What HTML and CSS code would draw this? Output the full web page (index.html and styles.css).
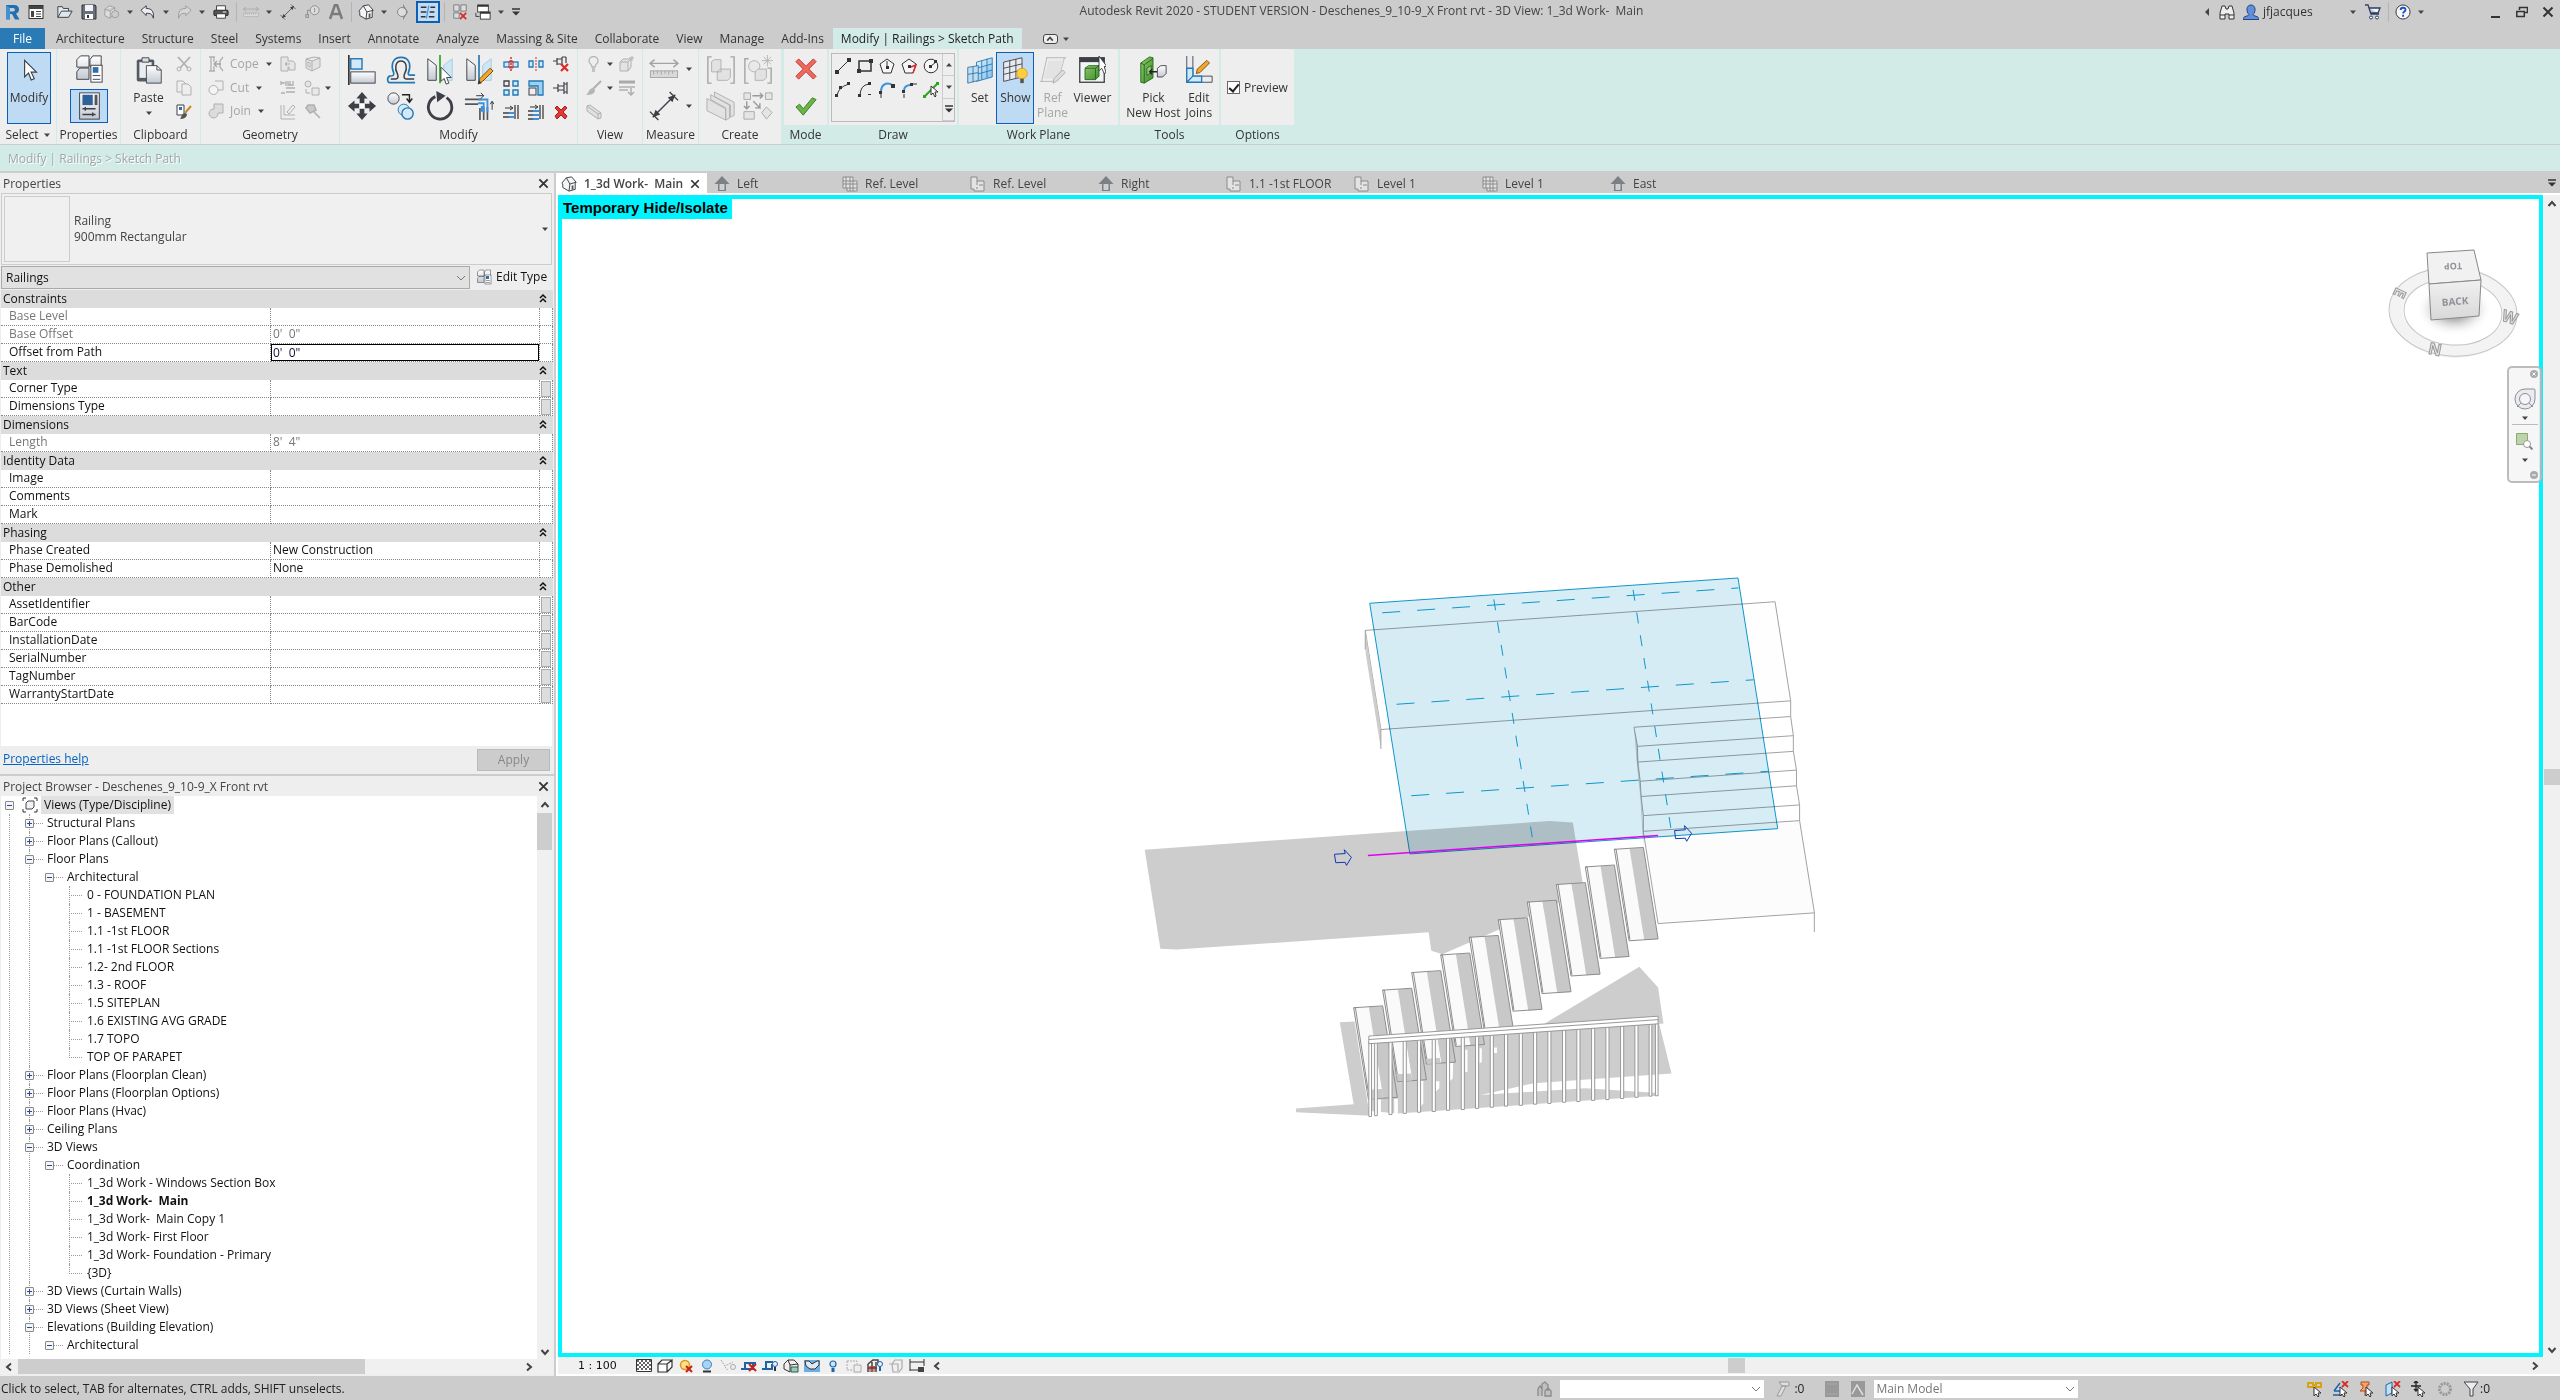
FILE: index.html
```html
<!DOCTYPE html>
<html lang="en">
<head>
<meta charset="utf-8">
<title>Autodesk Revit 2020</title>
<link rel="stylesheet" href="styles.css">
</head>
<body>
<svg class="sprite" aria-hidden="true">
  <defs>
    <linearGradient id="g-steel" x1="0" y1="0" x2="0" y2="1"><stop offset="0" stop-color="#fff"/><stop offset="1" stop-color="#c3c9d2"/></linearGradient>
    <linearGradient id="g-sky" x1="0" y1="0" x2="1" y2="1"><stop offset="0" stop-color="#e3f3fd"/><stop offset="1" stop-color="#7dbde8"/></linearGradient>
    <linearGradient id="g-green" x1="0" y1="0" x2="1" y2="1"><stop offset="0" stop-color="#8cc66a"/><stop offset="1" stop-color="#3f8f2c"/></linearGradient>
    <linearGradient id="g-cube" x1="0" y1="0" x2="0" y2="1"><stop offset="0" stop-color="#f0f0f0"/><stop offset="1" stop-color="#d8d8d8"/></linearGradient>
    <radialGradient id="g-shade"><stop offset=".4" stop-color="#b5b5b5"/><stop offset="1" stop-color="#fff" stop-opacity="0"/></radialGradient>
  </defs>
  <!-- 16px quick access and status icons -->
  <symbol id="logo" viewBox="0 0 16 16"><path d="M2 1h8q5 0 5 4.500 0 3-3 4l3.500 6H11L8 10H6v5.500H2z" fill="#1f6fb2"/><path d="M6 4v3.500h3q2 0 2-1.700T9 4z" fill="#ccc"/><path d="M2 1l4 3v11H2z" fill="#3f93d4"/></symbol>
  <symbol id="home" viewBox="0 0 16 16"><rect x="1" y="1.500" width="14" height="13" fill="#fff" stroke="#333"/><path d="M1 2h14v3H1zM3 7h3v6H3z" fill="#444"/><path d="M8 7.500h5M8 10h5M8 12.500h5" stroke="#444"/></symbol>
  <symbol id="open" viewBox="0 0 18 16"><path d="M1 14V2h5l1 2h6v3" fill="#e6ebf2" stroke="#333"/><path d="M1 14L5 7h12l-4 7z" fill="#dfe6ef" stroke="#333"/></symbol>
  <symbol id="save" viewBox="0 0 16 16"><path d="M1 1h13l1 1v13H1z" fill="#6a717c" stroke="#333"/><path d="M4 1h8v6H4z" fill="#f0f3f7"/><path d="M4 10h8v5H4z" fill="#fff"/><path d="M6 11h2v3H6z" fill="#333"/></symbol>
  <symbol id="sync" viewBox="0 0 18 16"><path d="M1 5l5-4 6 2v8l-6 4-5-3zM1 5l6 2 5-4M7 7v8" fill="#ddd" stroke="#999"/><circle cx="12.500" cy="10.500" r="4" fill="#ccc" stroke="#999"/></symbol>
  <symbol id="undo" viewBox="0 0 18 16"><path d="M1 6l6-5v3c6 0 9 3 8 11-1-4-3-6-8-5.500V12z" fill="#e9eef4" stroke="#333"/></symbol>
  <symbol id="redo" viewBox="0 0 18 16"><path d="M17 6l-6-5v3C5 4 2 7 3 15c1-4 3-6 8-5.500V12z" fill="#d6d6d6" stroke="#999"/></symbol>
  <symbol id="print" viewBox="0 0 18 16"><path d="M4 6V1h10v5" fill="#fff" stroke="#333"/><rect x="1" y="6" width="16" height="6" rx="1" fill="#555" stroke="#222"/><path d="M4 10h10v5H4z" fill="#fff" stroke="#333"/><path d="M11 8h4" stroke="#fff"/></symbol>
  <symbol id="ruler" viewBox="0 0 32 22"><path d="M1 5h30M6 1L1 5l5 4M26 1l5 4-5 4" fill="none" stroke="#a3a3a3" stroke-width="1.500"/><rect x="1.500" y="13" width="29" height="7" fill="#d9d9d9" stroke="#a3a3a3"/><path d="M5 13v4M9 13v3M13 13v4M17 13v3M21 13v4M25 13v3" stroke="#a3a3a3"/></symbol>
  <symbol id="dim" viewBox="0 0 32 32"><path d="M4 28L28 4M1 22l9 9M22 1l9 9" stroke="#3c3f45" stroke-width="1.500"/><path d="M4 28l3-8 5 5zM28 4l-8 3 5 5z" fill="#3c3f45"/></symbol>
  <symbol id="tag" viewBox="0 0 18 16"><circle cx="12" cy="6" r="5" fill="#ddd" stroke="#888"/><path d="M12 3.500v5M7 6H4v5" fill="none" stroke="#888"/><rect x="2" y="11" width="3" height="3" fill="none" stroke="#888"/></symbol>
  <symbol id="letter" viewBox="0 0 16 16"><path d="M2 15L7 1h2l5 14M4 10h8" fill="none" stroke="#7b7b7b" stroke-width="2.500"/></symbol>
  <symbol id="house" viewBox="0 0 18 18"><path d="M1 8l5-6 6-1 5 6-1 1v7l-7 2-7-4V9z" fill="#f3f5f8" stroke="#333"/><path d="M6 2l4 7-1 8M10 9l7-2" fill="none" stroke="#333"/><path d="M12 11l2-.6V15l-2 .7z" fill="#555"/></symbol>
  <symbol id="section" viewBox="0 0 16 16"><path d="M8 0l5 8-5 8z" fill="#888"/><circle cx="7" cy="8" r="4.500" fill="#ddd" stroke="#888"/></symbol>
  <symbol id="thin" viewBox="0 0 20 18"><path d="M1 3h7M13 3h6M1 9h7M12 9h6M1 15h6M11 15h7" stroke="#333" stroke-width="2"/><path d="M11 1L8 17" stroke="#3e92dc" stroke-width="1.500"/></symbol>
  <symbol id="closewin" viewBox="0 0 16 18"><path d="M1 1h6v7H1zM9 1h6v7H9zM1 10h6v6H1z" fill="#ddd" stroke="#777"/><path d="M8 10l7 7m0-7l-7 7" stroke="#d92b2b" stroke-width="2"/></symbol>
  <symbol id="switchwin" viewBox="0 0 18 18"><rect x="3" y="1" width="12" height="8" fill="#fff" stroke="#333"/><rect x="6" y="9" width="11" height="8" fill="#fff" stroke="#333"/><path d="M3 2h12M6 10h11" stroke="#333" stroke-width="2"/><path d="M1 10v4h4" fill="none" stroke="#333"/></symbol>
  <symbol id="binoc" viewBox="0 0 16 16"><path d="M1 15V9l2-7h3l1 3h2l1-3h3l2 7v6h-5v-5H6v5z" fill="#eee" stroke="#333"/><path d="M1 11h5M10 11h5" stroke="#333"/></symbol>
  <symbol id="user" viewBox="0 0 16 16"><path d="M0 15.500c0-4 6-3 6-5C3 8 3 1 8 1s5 7 2 9.500c0 2 6 1 6 5z" fill="#5f8fdd" stroke="#26437c"/></symbol>
  <symbol id="cart" viewBox="0 0 16 16"><path d="M0 1h3l3 9h8M4 4h11l-2 5H6" fill="#f2f5fa" stroke="#2b3f66" stroke-width="1.300"/><circle cx="6" cy="13.500" r="1.500" fill="#fff" stroke="#2b3f66"/><circle cx="12" cy="13.500" r="1.500" fill="#fff" stroke="#2b3f66"/></symbol>
  <symbol id="help" viewBox="0 0 17 17"><circle cx="8.500" cy="8.500" r="7.500" fill="#f4f6fa" stroke="#333"/><path d="M6 6.500q0-2.500 2.600-2.500t2.500 2.300c0 1.700-2.400 1.700-2.400 3.700M8.600 11.500v2" fill="none" stroke="#1c4fc0" stroke-width="2"/></symbol>
  <symbol id="cross" viewBox="0 0 12 12"><path d="M1.500 1.500l9 9m0-9l-9 9" stroke="#333" stroke-width="2"/></symbol>
  <symbol id="min" viewBox="0 0 12 12"><path d="M1 11h9" stroke="#333" stroke-width="2"/></symbol>
  <symbol id="restore" viewBox="0 0 12 12"><path d="M3.500 4V1.500h8v5H9" fill="none" stroke="#333" stroke-width="1.500"/><path d="M.8 5.500h7.500v5H.8z" fill="none" stroke="#333" stroke-width="1.500"/></symbol>
  <symbol id="caret" viewBox="0 0 8 8"><path d="M1 2.500h6L4 6z" fill="#444"/></symbol>
  <symbol id="caretbar" viewBox="0 0 8 8"><path d="M0 1h8" stroke="#333" stroke-width="1.500"/><path d="M0 3.500h8L4 7.500z" fill="#333"/></symbol>
  <symbol id="left" viewBox="0 0 8 8"><path d="M6 0v8L2 4z" fill="#444"/></symbol>
  <symbol id="up" viewBox="0 0 10 10"><path d="M1.500 7L5 3l3.500 4" fill="none" stroke="#444" stroke-width="2"/></symbol>
  <symbol id="dbl" viewBox="0 0 10 10"><path d="M2 5l3-3 3 3M2 9l3-3 3 3" fill="none" stroke="#111" stroke-width="1.500"/></symbol>
  <!-- ribbon icons -->
  <symbol id="cursor" viewBox="0 0 32 32"><path d="M11 5v19l4.500-4.500 3 8 3.500-1.500-3.500-7.500h6z" fill="#fff" stroke="#3c3f45" stroke-width="1.300"/></symbol>
  <symbol id="types" viewBox="0 0 32 32"><path d="M3 6l4-4h9v12H3zM17 6l3-4h9v12H17zM3 19l3-4h10v12H3z" fill="url(#g-steel)" stroke="#3c3f45"/><rect x="18" y="12" width="12" height="18" fill="#fff" stroke="#3c3f45"/><rect x="20" y="14" width="6" height="6" fill="#2f6ea9"/><path d="M20 23h8M20 27h8" stroke="#3c3f45"/></symbol>
  <symbol id="props" viewBox="0 0 32 32"><rect x="6" y="2" width="21" height="28" fill="url(#g-steel)" stroke="#3c3f45"/><rect x="9" y="4" width="11" height="11" fill="#2f6299"/><path d="M22 4h3v11h-3z" fill="#555"/><path d="M9 19h14M9 25h14M12 17v4M20 23v4" stroke="#3c3f45" stroke-width="1.500"/></symbol>
  <symbol id="paste" viewBox="0 0 32 32"><rect x="2" y="4" width="20" height="25" rx="2" fill="#555b66"/><path d="M5 7h14v18H5z" fill="#e9edf2"/><path d="M8 2h8v5H8z" fill="#ddd" stroke="#3c3f45"/><path d="M13 11h12l5 5v15H13z" fill="url(#g-steel)" stroke="#3c3f45"/><path d="M25 11v5h5" fill="none" stroke="#3c3f45"/></symbol>
  <symbol id="cut" viewBox="0 0 16 16"><path d="M2 1l10 11M14 1L4 12" stroke="#b0b0b0" stroke-width="1.800"/><circle cx="3" cy="13" r="2" fill="none" stroke="#b0b0b0"/><circle cx="13" cy="13" r="2" fill="none" stroke="#b0b0b0"/></symbol>
  <symbol id="copyclip" viewBox="0 0 16 16"><path d="M1 1h6l3 3v8H1z" fill="#eee" stroke="#b0b0b0"/><path d="M6 4h6l3 3v8H6z" fill="#eee" stroke="#b0b0b0"/></symbol>
  <symbol id="match" viewBox="0 0 16 16"><path d="M1 1h7v10H1z" fill="#fff" stroke="#3c3f45"/><path d="M3 3h3v3H3z" fill="#2f6ea9"/><path d="M15 2l-6 7" stroke="#c98a2b" stroke-width="2"/><path d="M9 9l2 1c0 4-4 5-7 5 2-2 1-5 5-6z" fill="#555"/></symbol>
  <symbol id="cope" viewBox="0 0 16 16"><path d="M1 1h6M1 15h6M3 1v14M6 1v5M6 10v5M15 1l-3 4v6l3 4" fill="none" stroke="#b0b0b0" stroke-width="1.300"/><path d="M7 8h6M9 5L6 8l3 3" fill="none" stroke="#a5a5a5" stroke-width="1.300"/></symbol>
  <symbol id="gcut" viewBox="0 0 16 16"><path d="M7 1h8v9h-5" fill="#eee" stroke="#b0b0b0"/><circle cx="5.500" cy="10" r="4.500" fill="#f4f4f4" stroke="#b0b0b0"/></symbol>
  <symbol id="gjoin" viewBox="0 0 16 16"><path d="M6 1h9v9h-5a4.500 4.500 0 1 1-4-4z" fill="#dcdcdc" stroke="#b0b0b0"/></symbol>
  <symbol id="g1" viewBox="0 0 16 16"><path d="M1 1h7v4l5 0 2 2v7H9v-3H8v4H1z" fill="#e6e6e6" stroke="#b0b0b0"/><path d="M10 8H5m2-2L5 8l2 2" fill="none" stroke="#aaa"/></symbol>
  <symbol id="g2" viewBox="0 0 16 16"><path d="M1 3l6 2v10l-6-3zM7 5l8-3v9l-8 4M1 3l8-2 6 1" fill="#e2e2e2" stroke="#b0b0b0"/><path d="M3 6v4l2 1V7z" fill="#fff" stroke="#b0b0b0"/></symbol>
  <symbol id="g3" viewBox="0 0 16 16"><path d="M1 1v4M6 1v5M8 1v4h5V1M10 1v4M6 8h9M6 12h9M1 13h4M1 3h4" fill="none" stroke="#b0b0b0" stroke-width="1.300"/></symbol>
  <symbol id="g4" viewBox="0 0 16 16"><circle cx="4" cy="4" r="3" fill="#e5e5e5" stroke="#b0b0b0"/><path d="M8 8h7v7H8zM2 9v4h4" fill="#e9e9e9" stroke="#b0b0b0"/></symbol>
  <symbol id="g5" viewBox="0 0 16 16"><path d="M1 1v14h14M4 1v10h11M7 8l6-7 2 2-6 7z" fill="none" stroke="#b0b0b0"/></symbol>
  <symbol id="g6" viewBox="0 0 16 16"><path d="M3 1h6l2 5-6 3-4-5zM9 8l6 6" fill="#c9c9c9" stroke="#b0b0b0" stroke-width="1.600"/></symbol>
  <symbol id="align" viewBox="0 0 32 32"><path d="M2 0v32" stroke="#111" stroke-width="1.500"/><rect x="4" y="4" width="12" height="11" fill="#d4e9f8" stroke="#2178b5" stroke-width="1.500"/><rect x="4" y="18" width="26" height="12" fill="url(#g-steel)" stroke="#3c3f45"/></symbol>
  <symbol id="offset" viewBox="0 0 32 32"><path d="M5 25.500h6q3-1 1-6c-3-5-2-13 4-13s7 8 4 13q-2 5 1 6h9" fill="none" stroke="#3c3f45" stroke-width="1.600"/><path d="M31 29.500H4c-3 0-3-6 0-7 4 0 5-1 4-4-3-8-1-16 8-16s11 8 8 16q-1 3 2 3h5" fill="none" stroke="#2178b5" stroke-width="1.800"/></symbol>
  <symbol id="mirror" viewBox="0 0 32 32"><path d="M3 4l9 7v16H3z" fill="url(#g-steel)" stroke="#3c3f45"/><path d="M29 4l-9 7v16h9z" fill="#cfe6f4" stroke="#a3cbe3"/></symbol>
  <symbol id="mirrorpick" viewBox="0 0 32 32"><use href="#mirror"/><path d="M16 0v30" stroke="#2ca51c" stroke-width="1.800"/><path d="M17 13v15l3.500-3 2 6 3-1-2.500-6h5z" fill="#fff" stroke="#3c3f45"/></symbol>
  <symbol id="mirrordraw" viewBox="0 0 32 32"><use href="#mirror"/><path d="M16 0v30" stroke="#2178b5" stroke-width="1.800"/><path d="M15 31l2-6 11-11 3 3-11 11z" fill="#f3a628" stroke="#6b4a13"/><path d="M15 31l1-4 3 3z" fill="#333"/></symbol>
  <symbol id="move" viewBox="0 0 32 32"><path d="M16 1l6 7h-3.500v5h-5V8H10zM16 31l6-7h-3.500v-5h-5v5H10zM1 16l7-6v3.500h5v5H8V22zM31 16l-7-6v3.500h-5v5h5V22z" fill="#3c3f45"/><rect x="13.500" y="13.500" width="5" height="5" fill="#fff"/></symbol>
  <symbol id="copy" viewBox="0 0 32 32"><circle cx="8" cy="8" r="6" fill="url(#g-steel)" stroke="#3c3f45"/><path d="M17 4h8v7M22 8l3 4 3-4" fill="none" stroke="#222" stroke-width="1.500"/><circle cx="19" cy="20" r="6" fill="#d4e9f8" stroke="#2178b5"/><circle cx="23" cy="24" r="6" fill="#d4e9f8" stroke="#2178b5" stroke-width="1.500"/></symbol>
  <symbol id="rotate" viewBox="0 0 32 32"><path d="M23 7a12.500 12.500 0 1 1-12-1" fill="none" stroke="#3c3f45" stroke-width="3"/><path d="M12 0l10 5-9 7z" fill="#3c3f45"/></symbol>
  <symbol id="trim" viewBox="0 0 32 32"><path d="M1 9h18M1 14h14M21 17v14M17 18v13M25 17v14" stroke="#555" stroke-width="1.800"/><path d="M15 9h10v14M15 13h6v10M19 16v6" fill="none" stroke="#3e92dc" stroke-width="2"/><path d="M13 5h8m-3-3l3 3-3 3M30 20v-9m-2 3l2-3 2 3" fill="none" stroke="#333"/></symbol>
  <symbol id="split" viewBox="0 0 16 16"><rect x="1" y="6" width="14" height="5" fill="#d4e9f8" stroke="#2178b5" stroke-width="1.300"/><path d="M8 1v14" stroke="#d92b2b" stroke-width="1.500" stroke-dasharray="2 1"/><path d="M6 5h4v7H6z" fill="none" stroke="#d92b2b"/></symbol>
  <symbol id="splitgap" viewBox="0 0 16 16"><path d="M1 5h4v6H1zM11 5h4v6h-4z" fill="#d4e9f8" stroke="#2178b5" stroke-width="1.300"/><path d="M8 1v14" stroke="#d92b2b" stroke-dasharray="2 1"/></symbol>
  <symbol id="pin" viewBox="0 0 16 16"><path d="M0 8h5M5 4v8M5 6h6M5 10h6M11 2v12M14 2v12M11 4h3M11 12h3" fill="none" stroke="#3c3f45" stroke-width="1.200"/></symbol>
  <symbol id="unpin" viewBox="0 0 16 16"><path d="M0 5h4M4 2v7M4 3h5M4 8h4M9 1v8M13 1v6M9 1h4" fill="none" stroke="#3c3f45" stroke-width="1.200"/><path d="M8 8l7 7m0-7l-7 7" stroke="#d92b2b" stroke-width="2.200"/></symbol>
  <symbol id="array" viewBox="0 0 16 16"><path d="M1 1h5v5H1z" fill="#eee" stroke="#3c3f45" stroke-width="1.300"/><path d="M10 1h5v5h-5zM1 10h5v5H1zM10 10h5v5h-5z" fill="#d4e9f8" stroke="#2178b5" stroke-width="1.400"/></symbol>
  <symbol id="scale" viewBox="0 0 16 16"><path d="M1 1h14v14h-5V6H1z" fill="#9fd0f0" stroke="#2178b5" stroke-width="1.300"/><rect x="1" y="8" width="7" height="7" fill="#eee" stroke="#3c3f45"/></symbol>
  <symbol id="trim1" viewBox="0 0 16 16"><path d="M0 9h9M0 13h9M12 1v14M15 1v14" stroke="#3c3f45" stroke-width="1.300"/><path d="M6 9h5M6 13h5" stroke="#3e92dc" stroke-width="2"/><path d="M2 4h7M7 2l3 2-3 2" stroke="#333" fill="none"/></symbol>
  <symbol id="trim2" viewBox="0 0 16 16"><path d="M0 7h8M0 11h8M0 15h8M12 1v14M15 1v14" stroke="#3c3f45" stroke-width="1.300"/><path d="M5 7h6M5 11h6M5 15h6" stroke="#3e92dc" stroke-width="2"/><path d="M2 3h7M7 1l3 2-3 2" stroke="#333" fill="none"/></symbol>
  <symbol id="del" viewBox="0 0 16 16"><path d="M2 4l2-2 4 4 4-4 2 2-4 4 4 4-2 3-4-4-4 4-2-3 4-4z" fill="#e23a35" stroke="#a81c1c"/></symbol>
  <symbol id="bulbg" viewBox="0 0 16 16"><path d="M6 11c0-3-3-3-3-6a4.500 4.500 0 0 1 9 0c0 3-3 3-3 6zM6 13h3M6 15h3" fill="#eee" stroke="#b5b5b5" stroke-width="1.300"/></symbol>
  <symbol id="boxg" viewBox="0 0 16 16"><path d="M1 6h8v9H1zM1 6l3-3h8L9 6M12 3v8l-3 4" fill="#e3e3e3" stroke="#b0b0b0"/><path d="M13 0v5M10 2h5" stroke="#b0b0b0"/></symbol>
  <symbol id="brushg" viewBox="0 0 16 16"><path d="M15 1L7 9" stroke="#b0b0b0" stroke-width="2"/><path d="M7 8l2 2c0 4-4 5-9 5 3-2 2-6 7-7z" fill="#b5b5b5"/></symbol>
  <symbol id="linesg" viewBox="0 0 16 16"><path d="M0 2h16" stroke="#aaa" stroke-width="3"/><path d="M0 7h16M0 10h9M12 8v7M9 12l3 3 3-3" fill="none" stroke="#b0b0b0" stroke-width="1.500"/></symbol>
  <symbol id="plankg" viewBox="0 0 16 16"><path d="M1 2l3-1 11 8v5l-3 1L1 7zM1 2l11 8v5M12 10l3-1" fill="#e0e0e0" stroke="#b0b0b0"/></symbol>
  <symbol id="groupg" viewBox="0 0 32 32"><path d="M6 2H2v28h4M26 2h4v28h-4" fill="none" stroke="#a5a5a5" stroke-width="1.500"/><path d="M6 7l3-2h7v13H6zM12 18l3-3h11v9l-3 3H12z" fill="#e2e2e2" stroke="#b0b0b0"/></symbol>
  <symbol id="simg" viewBox="0 0 32 32"><path d="M6 4H2v26h4M26 14h4v16h-4" fill="none" stroke="#a5a5a5" stroke-width="1.500"/><circle cx="12" cy="12" r="6" fill="#e9e9e9" stroke="#b0b0b0"/><path d="M13 18l3-3h9v9l-3 3h-9z" fill="#e2e2e2" stroke="#b0b0b0"/><path d="M26 0v12M20 6h12M22 2l8 8M30 2l-8 8" stroke="#b5b5b5"/></symbol>
  <symbol id="partsg" viewBox="0 0 32 32"><path d="M9 1l21 11v14l-4 2V15L9 6zM5 4l20 11v14l-4 2V18L5 9zM1 8l20 11v12L1 21z" fill="#e2e2e2" stroke="#b0b0b0"/></symbol>
  <symbol id="asmg" viewBox="0 0 32 32"><path d="M1 2h7v7H1zM24 2h7v7h-7zM1 22h11v8H1zM20 23l5-6 6 6-6 7z" fill="#e5e5e5" stroke="#a9a9a9"/><path d="M10 5h11M18 2l3 3-3 3M4 11v8M1 16l3 3 3-3M11 11l7 7v-5M18 18h-5" fill="none" stroke="#999" stroke-width="1.500"/></symbol>
  <symbol id="cancel" viewBox="0 0 24 24"><path d="M1 4l3-3 8 8 8-8 3 3-8 8 8 8-3 3-8-8-8 8-3-3 8-8z" fill="#ef6a5e" stroke="#c22f2b"/></symbol>
  <symbol id="ok" viewBox="0 0 24 24"><path d="M1 13l4-3 4 5L19 3l4 2L9 22z" fill="#6bb548" stroke="#3a7c22"/></symbol>
  <symbol id="d1" viewBox="0 0 16 16"><path d="M2 14L14 2" stroke="#333"/><path d="M0 12h4v4H0zM12 0h4v4h-4z" fill="#333"/></symbol>
  <symbol id="d2" viewBox="0 0 16 16"><path d="M2 3h12v10H2z" fill="#eee" stroke="#333" stroke-width="1.500"/><path d="M0 11h4v4H0zM12 1h4v4h-4z" fill="#333"/></symbol>
  <symbol id="d3" viewBox="0 0 16 16"><path d="M8 1l7 5-3 9H4L1 6z" fill="#f6f6f6" stroke="#333"/><path d="M8 3v6" stroke="#333"/><path d="M7 8h3v3H7z" fill="#333"/></symbol>
  <symbol id="d4" viewBox="0 0 16 16"><path d="M8 1l7 5-3 9H4L1 6z" fill="#f6f6f6" stroke="#333"/><path d="M7 7h3v3H7z" fill="#333"/><path d="M10 9l5-2-3 8" fill="none" stroke="#d92b2b" stroke-width="1.500"/></symbol>
  <symbol id="d5" viewBox="0 0 16 16"><circle cx="8" cy="8" r="6.800" fill="#f6f6f6" stroke="#333"/><path d="M8 8l5-4" stroke="#333"/><path d="M6 7h3v3H6zM11 2h3v3h-3z" fill="#333"/></symbol>
  <symbol id="d6" viewBox="0 0 16 16"><path d="M2 14Q3 5 14 2" fill="none" stroke="#333"/><path d="M0 12h3v3H0zM12 0h3v3h-3zM4 4h3v3H4z" fill="#333"/></symbol>
  <symbol id="d7" viewBox="0 0 16 16"><path d="M3 14Q3 3 12 2" fill="none" stroke="#333"/><path d="M1 12h3v3H1zM11 0h3v3h-3zM11 12h3v1h-3z" fill="#333"/></symbol>
  <symbol id="d8" viewBox="0 0 16 16"><path d="M2 10C2 0 11 0 14 4" fill="none" stroke="#3e92dc" stroke-width="2"/><path d="M0 9h3v3H0zM12 2h4v4h-4z" fill="#333"/><path d="M2 12v4" stroke="#333"/></symbol>
  <symbol id="d9" viewBox="0 0 16 16"><path d="M3 9c0-5 4-6 7-6" fill="none" stroke="#3e92dc" stroke-width="2"/><path d="M1 8h3v3H1zM9 1h3v3H9z" fill="#333"/><path d="M3 12v4M12 2h4" stroke="#333"/></symbol>
  <symbol id="d10" viewBox="0 0 16 16"><path d="M1 15L15 1" stroke="#2ca51c" stroke-width="2"/><path d="M0 13h3v3H0zM13 0h3v3h-3z" fill="#2ca51c"/><path d="M8 4v9l2-2 2 4 1-1-1-4h3z" fill="#fff" stroke="#333"/></symbol>
  <symbol id="setwp" viewBox="0 0 32 32"><path d="M12 7l18-5v22l-18 5z" fill="url(#g-sky)" stroke="#2178b5"/><path d="M18 5v22M24 3v22M12 14l18-5M12 21l18-5" stroke="#2178b5"/><path d="M2 13l12-2v17l-12 3z" fill="#bcdff5" stroke="#3b6f99"/><path d="M8 12v18M2 21l12-2" stroke="#3b6f99"/></symbol>
  <symbol id="showwp" viewBox="0 0 32 32"><path d="M3 7l21-5v22l-21 5z" fill="#e8eaf0" stroke="#3c3f45"/><path d="M10 5v22M17 3.500v22M3 14l21-5M3 21l21-5" stroke="#3c3f45"/><circle cx="24" cy="20" r="6" fill="#ffcf3f" stroke="#d69a1a"/><path d="M22 26h4v5h-4z" fill="#555"/></symbol>
  <symbol id="refwp" viewBox="0 0 32 32"><path d="M8 2h23M1 29h18M9 2L3 29M29 2l-7 26" fill="none" stroke="#b0b0b0"/><path d="M11 5h17l-6 21H5z" fill="#e3e3e3"/><path d="M16 31l1-5 10-10 3 3-10 10z" fill="#ddd" stroke="#a9a9a9"/></symbol>
  <symbol id="viewer" viewBox="0 0 32 32"><rect x="2" y="2" width="28" height="28" fill="#f2f3f5" stroke="#3c3f45" stroke-width="1.500"/><path d="M2 2h28v5H2z" fill="#3c3f45"/><path d="M8 14l4-3h12v12l-4 4H8z" fill="url(#g-green)" stroke="#24661a"/><path d="M8 14h12v13M20 14l4-3" fill="none" stroke="#24661a"/><path d="M24 0v17l3-3 3 6 2-1-2-7h3z" fill="#fff" stroke="#333"/></symbol>
  <symbol id="host" viewBox="0 0 32 32"><path d="M2 8l10-7 4 1v23L6 31l-4-1z" fill="url(#g-green)" stroke="#24661a"/><path d="M6 10l10-7M6 10v21M6 10L2 8M9 14l5-3v8l-5 3z" fill="#9ccf80" stroke="#24661a"/><path d="M12 18h9M15 15l-3 3 3 3" fill="none" stroke="#222" stroke-width="1.500"/><path d="M21 14l4-3 6 0v9l-4 4h-6z" fill="url(#g-steel)" stroke="#3c3f45"/></symbol>
  <symbol id="joins" viewBox="0 0 32 32"><path d="M2 0v30h29v-7H9V0" fill="#e9edf2" stroke="#3c3f45"/><path d="M2 14v16h17v-7H9v-9zM2 30l7-7" fill="#cfe8fa" stroke="#2178b5" stroke-width="1.500"/><path d="M13 20l1-5L25 5l3 3-11 11z" fill="#f3a628" stroke="#6b4a13"/></symbol>
  <!-- view tab icons -->
  <symbol id="elev" viewBox="0 0 16 16"><path d="M8 0l7.500 8H12v7H4V8H.5z" fill="#7c7f85"/><path d="M5.500 8h5v6h-5z" fill="#cfcfcf"/></symbol>
  <symbol id="plan" viewBox="0 0 16 16"><path d="M1 1h6v4h7v10H4v-2H1z" fill="#e3e3e3" stroke="#8a8a8a"/><path d="M7 5v4M7 11v2M9 9h4" stroke="#8a8a8a"/></symbol>
  <symbol id="ceil" viewBox="0 0 16 16"><path d="M1 1h10v4h4v10H5v-3H1z" fill="#e3e3e3" stroke="#8a8a8a"/><path d="M4 1v11M8 1v14M11 5v10M1 5h10M1 8h14M5 12h10" stroke="#8a8a8a"/></symbol>
  <symbol id="viewsroot" viewBox="0 0 16 16"><path d="M4 1H1v3M12 1h3v3M1 12v3h3M15 12v3h-3" fill="none" stroke="#333"/><path d="M4 6l2-2h6v6l-2 2H4z" fill="#f2f2f8" stroke="#444"/></symbol>
  <!-- view control icons -->
  <symbol id="v1" viewBox="0 0 16 14"><path d="M.5.500h15v12H.5z" fill="#fff" stroke="#333"/><path d="M1 2h14M1 6h14M1 10h14" stroke="#666" stroke-width="2" stroke-dasharray="2 2"/><path d="M3 4h12M3 8h12" stroke="#666" stroke-width="2" stroke-dasharray="2 2"/></symbol>
  <symbol id="v2" viewBox="0 0 16 14"><path d="M1 5h9v8H1zM1 5l4-4h10l-5 4M15 1v7l-5 5" fill="#fff" stroke="#333" stroke-width="1.200"/></symbol>
  <symbol id="v3" viewBox="0 0 16 14"><circle cx="7" cy="6" r="4.500" fill="#ffe08a" stroke="#d69a1a" stroke-width="1.500"/><path d="M8 7l6 6m0-6l-6 6" stroke="#c8201c" stroke-width="2"/></symbol>
  <symbol id="v4" viewBox="0 0 16 14"><circle cx="8" cy="5.500" r="4.500" fill="#a6d4f5" stroke="#3e7fb8"/><path d="M4 12.500h8" stroke="#333" stroke-width="2"/></symbol>
  <symbol id="v5" viewBox="0 0 16 14"><path d="M1 1l4 6 8-4M5 8l3 3" fill="none" stroke="#aaa" stroke-dasharray="2 1"/><circle cx="13" cy="8" r="2.500" fill="#eee" stroke="#aaa"/></symbol>
  <symbol id="v6" viewBox="0 0 16 14"><path d="M0 10h4V4h11M4 10h8V5" fill="none" stroke="#1d63a8" stroke-width="2"/><path d="M8 5l7 7m0-7l-7 7" stroke="#c8201c" stroke-width="2"/></symbol>
  <symbol id="v7" viewBox="0 0 16 14"><path d="M0 10h4V3h7M4 10h6V5" fill="none" stroke="#1d63a8" stroke-width="2"/><circle cx="13" cy="5" r="2.500" fill="#e8f4ff" stroke="#1d63a8"/><path d="M13 8v4" stroke="#333" stroke-width="2"/></symbol>
  <symbol id="v8" viewBox="0 0 16 14"><path d="M1 5l4-4h6l4 4v3M1 5v5l6 3V6L5 1M7 6l8-1" fill="#eee" stroke="#333"/><path d="M8 8h7v5H8z" fill="#9ec9b8" stroke="#2d5b4b"/></symbol>
  <symbol id="v9" viewBox="0 0 16 14"><path d="M0 1h16v12H0z" fill="#69aee6"/><path d="M1 2h4l3 3 5-3h2v4l-4 4H6L2 7z" fill="#e3e8ee" stroke="#333"/></symbol>
  <symbol id="v10" viewBox="0 0 16 14"><circle cx="8" cy="5" r="3" fill="#cde6fa" stroke="#1d63a8" stroke-width="1.200"/><path d="M8 9v4" stroke="#1d63a8" stroke-width="3"/></symbol>
  <symbol id="v11" viewBox="0 0 16 14"><path d="M1 2h10v3M1 2v9h6" fill="none" stroke="#aaa" stroke-dasharray="2 1"/><path d="M8 6h7v7H8z" fill="#eee" stroke="#aaa"/></symbol>
  <symbol id="v12" viewBox="0 0 16 14"><path d="M1 5l5-4h5v5M1 5v8M5 3v10M9 3v10M1 9h9" fill="none" stroke="#444" stroke-width="1.500"/><path d="M3 7v6M7 7v6M3 8h5" stroke="#c8201c"/><circle cx="13" cy="5" r="2.500" fill="#e8f4ff" stroke="#1d63a8"/><path d="M13 8v4" stroke="#1d63a8" stroke-width="2"/></symbol>
  <symbol id="v13" viewBox="0 0 16 14"><path d="M4 5l3-4h7v8l-3 4H5zM1 5h9v7" fill="none" stroke="#aaa" stroke-width="1.200"/></symbol>
  <symbol id="v14" viewBox="0 0 16 14"><path d="M1 0v12M15 0v7M1 3h14M1 11h8" fill="none" stroke="#333"/><path d="M9 8h6v5H9z" fill="#444"/></symbol>
  <!-- status bar icons -->
  <symbol id="s1" viewBox="0 0 16 16"><path d="M2 15V8l2-3 2 3v7M6 10V3l3-2 3 3v6M9 15v-5l3-3 3 3v5z" fill="#c0c0c0" stroke="#8a8a8a" stroke-width="1.300"/></symbol>
  <symbol id="s2" viewBox="0 0 16 16"><path d="M5 1h10v4H8zM8 5h4L7 15H3z" fill="#ddd" stroke="#999"/></symbol>
  <symbol id="s3" viewBox="0 0 16 16"><path d="M1 0h14v16H1z" fill="#999"/><path d="M3 3h10M3 13h10" stroke="#aaa"/></symbol>
  <symbol id="s4" viewBox="0 0 16 16"><path d="M1 0h14v16H1z" fill="#999"/><path d="M2 13l5-9 6 10" fill="none" stroke="#ddd" stroke-width="1.500"/></symbol>
  <symbol id="pick" viewBox="0 0 16 16"><path d="M7 6v9l2-2 2 3 1-1-1-3h3z" fill="#fff" stroke="#333"/></symbol>
  <symbol id="redx" viewBox="0 0 16 16"><path d="M9 0l6 6m0-6L9 6" stroke="#d92b2b" stroke-width="1.800"/></symbol>
  <symbol id="p1" viewBox="0 0 16 16"><path d="M1 2h5v4H1zM9 2h5v4H9zM5 4h5" fill="none" stroke="#d8a312" stroke-width="2"/><use href="#pick"/></symbol>
  <symbol id="p2" viewBox="0 0 16 16"><path d="M0 14h9M1 10h8l-2-4M1 10l6-8" fill="#bfe0f5" stroke="#1d63a8" stroke-width="1.500"/><use href="#pick"/><use href="#redx"/></symbol>
  <symbol id="p3" viewBox="0 0 16 16"><path d="M2 1h8v3H8v3l3 3H1l3-3V4H2zM6 10v5" fill="#f2a66b" stroke="#b7471c"/><use href="#pick"/></symbol>
  <symbol id="p4" viewBox="0 0 16 16"><path d="M1 4l6-3v11l-6 3z" fill="#bfe0f5" stroke="#1d63a8"/><use href="#pick"/><use href="#redx"/></symbol>
  <symbol id="p5" viewBox="0 0 16 16"><path d="M5 0v10M0 5h10M3 2l2-2 2 2M3 8l2 2 2-2" fill="none" stroke="#222" stroke-width="1.300"/><use href="#pick"/></symbol>
  <symbol id="p6" viewBox="0 0 16 16"><circle cx="8" cy="8" r="5.500" fill="none" stroke="#999" stroke-width="3" stroke-dasharray="2 1"/></symbol>
  <symbol id="p7" viewBox="0 0 16 16"><path d="M1 1h14L10 8v7H7V8z" fill="#e9edf2" stroke="#444"/></symbol>
</svg>

<div class="app">
  <header class="titlebar">
    <div class="qat">
      <button class="tool" aria-label="Revit"><svg><use href="#logo"/></svg></button>
      <button class="tool home" aria-label="Home"><svg><use href="#home"/></svg></button>
      <button class="tool" aria-label="Open"><svg><use href="#open"/></svg></button>
      <button class="tool" aria-label="Save"><svg><use href="#save"/></svg></button>
      <button class="tool drop" aria-label="Synchronize"><svg><use href="#sync"/></svg><svg class="caret"><use href="#caret"/></svg></button>
      <button class="tool drop" aria-label="Undo"><svg><use href="#undo"/></svg><svg class="caret"><use href="#caret"/></svg></button>
      <button class="tool drop" aria-label="Redo"><svg><use href="#redo"/></svg><svg class="caret"><use href="#caret"/></svg></button>
      <button class="tool" aria-label="Print"><svg><use href="#print"/></svg></button>
      <span class="rule"></span>
      <button class="tool drop" aria-label="Measure"><svg><use href="#ruler"/></svg><svg class="caret"><use href="#caret"/></svg></button>
      <button class="tool" aria-label="Aligned dimension"><svg><use href="#dim"/></svg></button>
      <button class="tool" aria-label="Tag by category"><svg><use href="#tag"/></svg></button>
      <button class="tool" aria-label="Text"><svg><use href="#letter"/></svg></button>
      <span class="rule"></span>
      <button class="tool drop" aria-label="Default 3D view"><svg><use href="#house"/></svg><svg class="caret"><use href="#caret"/></svg></button>
      <button class="tool" aria-label="Section"><svg><use href="#section"/></svg></button>
      <button class="tool on" aria-label="Thin lines"><svg><use href="#thin"/></svg></button>
      <span class="rule"></span>
      <button class="tool" aria-label="Close inactive views"><svg><use href="#closewin"/></svg></button>
      <button class="tool drop" aria-label="Switch windows"><svg><use href="#switchwin"/></svg><svg class="caret"><use href="#caret"/></svg></button>
      <button class="tool narrow" aria-label="Customize"><svg class="caret"><use href="#caretbar"/></svg></button>
    </div>
    <h1 class="title">Autodesk Revit 2020 - STUDENT VERSION - Deschenes_9_10-9_X Front rvt - 3D View: 1_3d Work-&nbsp; Main</h1>
    <div class="account">
      <button class="tool narrow" aria-label="Collapse"><svg class="caret"><use href="#left"/></svg></button>
      <button class="tool" aria-label="Search"><svg><use href="#binoc"/></svg></button>
      <button class="signin"><svg><use href="#user"/></svg><span>jfjacques</span><svg class="caret"><use href="#caret"/></svg></button>
      <button class="tool" aria-label="App store"><svg><use href="#cart"/></svg></button>
      <span class="rule"></span>
      <button class="tool drop" aria-label="Help"><svg><use href="#help"/></svg><svg class="caret"><use href="#caret"/></svg></button>
    </div>
    <div class="window">
      <button aria-label="Minimize"><svg><use href="#min"/></svg></button>
      <button aria-label="Restore"><svg><use href="#restore"/></svg></button>
      <button aria-label="Close"><svg><use href="#cross"/></svg></button>
    </div>
  </header>

  <nav class="tabs">
    <button class="file">File</button>
    <button>Architecture</button><button>Structure</button><button>Steel</button><button>Systems</button><button>Insert</button><button>Annotate</button><button>Analyze</button><button>Massing &amp; Site</button><button>Collaborate</button><button>View</button><button>Manage</button><button>Add-Ins</button>
    <button class="current">Modify | Railings &gt; Sketch Path</button>
    <button class="cycle" aria-label="Ribbon display"><span><svg><use href="#up"/></svg></span><svg class="caret"><use href="#caret"/></svg></button>
  </nav>

  <div class="ribbon">
    <section class="panel p-select"><div class="body"><button class="big tall on"><svg><use href="#cursor"/></svg>Modify</button></div><h2>Select <svg class="caret"><use href="#caret"/></svg></h2></section>
    <section class="panel p-props"><div class="body stack"><button class="lg" aria-label="Type properties"><svg><use href="#types"/></svg></button><button class="lg on" aria-label="Properties"><svg><use href="#props"/></svg></button></div><h2>Properties</h2></section>
    <section class="panel p-clip"><div class="body"><button class="big"><svg><use href="#paste"/></svg>Paste<svg class="caret"><use href="#caret"/></svg></button>
      <div class="small c1"><button aria-label="Cut"><svg><use href="#cut"/></svg></button><button aria-label="Copy"><svg><use href="#copyclip"/></svg></button><button aria-label="Match type"><svg><use href="#match"/></svg></button></div></div><h2>Clipboard</h2></section>
    <section class="panel p-geo"><div class="body">
      <div class="labelled"><button disabled><svg><use href="#cope"/></svg>Cope<svg class="caret"><use href="#caret"/></svg></button><button disabled><svg><use href="#gcut"/></svg>Cut<svg class="caret"><use href="#caret"/></svg></button><button disabled><svg><use href="#gjoin"/></svg>Join<svg class="caret"><use href="#caret"/></svg></button></div>
      <div class="small c2"><button aria-label="Wall joins"><svg><use href="#g1"/></svg></button><button aria-label="Split face"><svg><use href="#g2"/></svg></button><button aria-label="Beam joins"><svg><use href="#g3"/></svg></button><button aria-label="Unjoin" class="withcaret"><svg><use href="#g4"/></svg><svg class="caret"><use href="#caret"/></svg></button><button aria-label="Paint"><svg><use href="#g5"/></svg></button><button aria-label="Demolish"><svg><use href="#g6"/></svg></button></div></div><h2>Geometry</h2></section>
    <section class="panel p-modify"><div class="body">
      <div class="large c4"><button aria-label="Align"><svg><use href="#align"/></svg></button><button aria-label="Offset"><svg><use href="#offset"/></svg></button><button aria-label="Mirror - pick axis"><svg><use href="#mirrorpick"/></svg></button><button aria-label="Mirror - draw axis"><svg><use href="#mirrordraw"/></svg></button><button aria-label="Move"><svg><use href="#move"/></svg></button><button aria-label="Copy"><svg><use href="#copy"/></svg></button><button aria-label="Rotate"><svg><use href="#rotate"/></svg></button><button aria-label="Trim"><svg><use href="#trim"/></svg></button></div>
      <div class="small c3"><button aria-label="Split"><svg><use href="#split"/></svg></button><button aria-label="Split with gap"><svg><use href="#splitgap"/></svg></button><button aria-label="Unpin"><svg><use href="#unpin"/></svg></button><button aria-label="Array"><svg><use href="#array"/></svg></button><button aria-label="Scale"><svg><use href="#scale"/></svg></button><button aria-label="Pin"><svg><use href="#pin"/></svg></button><button aria-label="Extend one"><svg><use href="#trim1"/></svg></button><button aria-label="Extend many"><svg><use href="#trim2"/></svg></button><button aria-label="Delete"><svg><use href="#del"/></svg></button></div></div><h2>Modify</h2></section>
    <section class="panel p-view"><div class="body"><div class="small c2 wide"><button class="withcaret" aria-label="Hide"><svg><use href="#bulbg"/></svg><svg class="caret"><use href="#caret"/></svg></button><button aria-label="Displace"><svg><use href="#boxg"/></svg></button><button class="withcaret" aria-label="Override"><svg><use href="#brushg"/></svg><svg class="caret"><use href="#caret"/></svg></button><button aria-label="Linework"><svg><use href="#linesg"/></svg></button><button class="withcaret" aria-label="Selection box"><svg><use href="#plankg"/></svg></button></div></div><h2>View</h2></section>
    <section class="panel p-measure"><div class="body stack"><button class="lg withcaret" aria-label="Measure"><svg><use href="#ruler"/></svg><svg class="caret"><use href="#caret"/></svg></button><button class="lg withcaret" aria-label="Dimension"><svg><use href="#dim"/></svg><svg class="caret"><use href="#caret"/></svg></button></div><h2>Measure</h2></section>
    <section class="panel p-create"><div class="body"><div class="large c2l"><button aria-label="Create group"><svg><use href="#groupg"/></svg></button><button aria-label="Create similar"><svg><use href="#simg"/></svg></button><button aria-label="Create parts"><svg><use href="#partsg"/></svg></button><button aria-label="Create assembly"><svg><use href="#asmg"/></svg></button></div></div><h2>Create</h2></section>
    <section class="panel ctx p-mode"><div class="body stack"><button class="lg mid" aria-label="Cancel"><svg><use href="#cancel"/></svg></button><button class="lg mid" aria-label="Finish"><svg><use href="#ok"/></svg></button></div><h2>Mode</h2></section>
    <section class="panel ctx p-draw"><div class="body"><div class="gallery"><div class="shapes"><button aria-label="Line"><svg><use href="#d1"/></svg></button><button aria-label="Rectangle"><svg><use href="#d2"/></svg></button><button aria-label="Inscribed polygon"><svg><use href="#d3"/></svg></button><button aria-label="Circumscribed polygon"><svg><use href="#d4"/></svg></button><button aria-label="Circle"><svg><use href="#d5"/></svg></button><button aria-label="Arc"><svg><use href="#d6"/></svg></button><button aria-label="Centre arc"><svg><use href="#d7"/></svg></button><button aria-label="Tangent arc"><svg><use href="#d8"/></svg></button><button aria-label="Fillet arc"><svg><use href="#d9"/></svg></button><button aria-label="Pick lines"><svg><use href="#d10"/></svg></button></div>
      <div class="spin"><button aria-label="Up"><svg class="caret flip"><use href="#caret"/></svg></button><button aria-label="Down"><svg class="caret"><use href="#caret"/></svg></button><button aria-label="More"><svg class="caret"><use href="#caretbar"/></svg></button></div></div></div><h2>Draw</h2></section>
    <section class="panel ctx p-work"><div class="body"><button class="big"><svg><use href="#setwp"/></svg>Set</button><button class="big tall on"><svg><use href="#showwp"/></svg>Show</button><button class="big" disabled><svg><use href="#refwp"/></svg>Ref<br>Plane</button><button class="big"><svg><use href="#viewer"/></svg>Viewer</button></div><h2>Work Plane</h2></section>
    <section class="panel ctx p-tools"><div class="body"><button class="big"><svg><use href="#host"/></svg>Pick<br>New Host</button><button class="big"><svg><use href="#joins"/></svg>Edit<br>Joins</button></div><h2>Tools</h2></section>
    <section class="panel ctx p-opt"><div class="body"><label class="check"><input type="checkbox" checked>Preview</label></div><h2>Options</h2></section>
  </div>
  <div class="optionsbar">Modify | Railings &gt; Sketch Path</div>

  <main class="work">
    <aside class="side">
      <section class="props">
        <header class="palette"><h2>Properties</h2><button aria-label="Close properties"><svg><use href="#cross"/></svg></button></header>
        <button class="typesel"><span class="thumb"></span><span class="name">Railing<br>900mm Rectangular</span><svg class="caret"><use href="#caret"/></svg></button>
        <div class="filter"><select aria-label="Category"><option>Railings</option></select><button><svg><use href="#types"/></svg>Edit Type</button></div>
        <div class="gridbox">
        <table class="grid">
          <colgroup><col class="k"><col class="v"><col class="b"></colgroup>
          <tbody><tr class="cat"><th colspan="3">Constraints<svg><use href="#dbl"/></svg></th></tr>
          <tr class="off"><td>Base Level</td><td></td><td></td></tr>
          <tr class="off"><td>Base Offset</td><td>0'&nbsp; 0"</td><td></td></tr>
          <tr><td><label for="offset-path">Offset from Path</label></td><td class="edit"><input id="offset-path" value="0'  0&quot;"></td><td></td></tr></tbody>
          <tbody><tr class="cat"><th colspan="3">Text<svg><use href="#dbl"/></svg></th></tr>
          <tr><td>Corner Type</td><td></td><td><button aria-label="Browse"></button></td></tr>
          <tr><td>Dimensions Type</td><td></td><td><button aria-label="Browse"></button></td></tr></tbody>
          <tbody><tr class="cat"><th colspan="3">Dimensions<svg><use href="#dbl"/></svg></th></tr>
          <tr class="off"><td>Length</td><td>8'&nbsp; 4"</td><td></td></tr></tbody>
          <tbody><tr class="cat"><th colspan="3">Identity Data<svg><use href="#dbl"/></svg></th></tr>
          <tr><td>Image</td><td></td><td></td></tr><tr><td>Comments</td><td></td><td></td></tr><tr><td>Mark</td><td></td><td></td></tr></tbody>
          <tbody><tr class="cat"><th colspan="3">Phasing<svg><use href="#dbl"/></svg></th></tr>
          <tr><td>Phase Created</td><td>New Construction</td><td></td></tr><tr><td>Phase Demolished</td><td>None</td><td></td></tr></tbody>
          <tbody><tr class="cat"><th colspan="3">Other<svg><use href="#dbl"/></svg></th></tr>
          <tr><td>AssetIdentifier</td><td></td><td><button aria-label="Browse"></button></td></tr>
          <tr><td>BarCode</td><td></td><td><button aria-label="Browse"></button></td></tr>
          <tr><td>InstallationDate</td><td></td><td><button aria-label="Browse"></button></td></tr>
          <tr><td>SerialNumber</td><td></td><td><button aria-label="Browse"></button></td></tr>
          <tr><td>TagNumber</td><td></td><td><button aria-label="Browse"></button></td></tr>
          <tr><td>WarrantyStartDate</td><td></td><td><button aria-label="Browse"></button></td></tr></tbody>
        </table>
        </div>
        <footer class="helpbar"><a href="#help-properties">Properties help</a><button disabled>Apply</button></footer>
      </section>
      <section class="browser">
        <header class="palette"><h2>Project Browser - Deschenes_9_10-9_X Front rvt</h2><button aria-label="Close browser"><svg><use href="#cross"/></svg></button></header>
        <div class="treebox">
          <ul class="tree">
            <li><div class="row"><button class="tg minus" aria-label="Collapse"></button><svg><use href="#viewsroot"/></svg><span class="sel">Views (Type/Discipline)</span></div>
              <ul class="l1">
                <li><div class="row"><button class="tg" aria-label="Expand"></button><span>Structural Plans</span></div></li>
                <li><div class="row"><button class="tg" aria-label="Expand"></button><span>Floor Plans (Callout)</span></div></li>
                <li><div class="row"><button class="tg minus" aria-label="Collapse"></button><span>Floor Plans</span></div>
                  <ul class="l2"><li><div class="row"><button class="tg minus" aria-label="Collapse"></button><span>Architectural</span></div>
                    <ul class="l3"><li>0 - FOUNDATION PLAN</li><li>1 - BASEMENT</li><li>1.1 -1st FLOOR</li><li>1.1 -1st FLOOR Sections</li><li>1.2- 2nd FLOOR</li><li>1.3 - ROOF</li><li>1.5 SITEPLAN</li><li>1.6 EXISTING AVG GRADE</li><li>1.7 TOPO</li><li>TOP OF PARAPET</li></ul></li></ul></li>
                <li><div class="row"><button class="tg" aria-label="Expand"></button><span>Floor Plans (Floorplan Clean)</span></div></li>
                <li><div class="row"><button class="tg" aria-label="Expand"></button><span>Floor Plans (Floorplan Options)</span></div></li>
                <li><div class="row"><button class="tg" aria-label="Expand"></button><span>Floor Plans (Hvac)</span></div></li>
                <li><div class="row"><button class="tg" aria-label="Expand"></button><span>Ceiling Plans</span></div></li>
                <li><div class="row"><button class="tg minus" aria-label="Collapse"></button><span>3D Views</span></div>
                  <ul class="l2"><li><div class="row"><button class="tg minus" aria-label="Collapse"></button><span>Coordination</span></div>
                    <ul class="l3"><li>1_3d Work - Windows Section Box</li><li><b>1_3d Work-&nbsp; Main</b></li><li>1_3d Work-&nbsp; Main Copy 1</li><li>1_3d Work- First Floor</li><li>1_3d Work- Foundation - Primary</li><li>{3D}</li></ul></li></ul></li>
                <li><div class="row"><button class="tg" aria-label="Expand"></button><span>3D Views (Curtain Walls)</span></div></li>
                <li><div class="row"><button class="tg" aria-label="Expand"></button><span>3D Views (Sheet View)</span></div></li>
                <li><div class="row"><button class="tg minus" aria-label="Collapse"></button><span>Elevations (Building Elevation)</span></div>
                  <ul class="l2"><li><div class="row"><button class="tg minus" aria-label="Collapse"></button><span>Architectural</span></div></li></ul></li>
              </ul></li>
          </ul>
          <div class="vbar"><svg><use href="#up"/></svg><i class="thumb"></i><svg class="flip"><use href="#up"/></svg></div>
        </div>
        <div class="hbar"><svg class="ccw"><use href="#up"/></svg><i class="thumb"></i><svg class="cw"><use href="#up"/></svg></div>
      </section>
    </aside>

    <section class="stage">
      <nav class="views">
        <div class="vt current"><button><svg><use href="#house"/></svg>1_3d Work-&nbsp; Main</button><button class="x" aria-label="Close view"><svg><use href="#cross"/></svg></button></div>
        <button class="vt"><svg><use href="#elev"/></svg>Left</button>
        <button class="vt"><svg><use href="#ceil"/></svg>Ref. Level</button>
        <button class="vt"><svg><use href="#plan"/></svg>Ref. Level</button>
        <button class="vt"><svg><use href="#elev"/></svg>Right</button>
        <button class="vt"><svg><use href="#plan"/></svg>1.1 -1st FLOOR</button>
        <button class="vt"><svg><use href="#plan"/></svg>Level 1</button>
        <button class="vt"><svg><use href="#ceil"/></svg>Level 1</button>
        <button class="vt"><svg><use href="#elev"/></svg>East</button>
        <button class="more" aria-label="View list"><svg class="caret"><use href="#caretbar"/></svg></button>
      </nav>
      <div class="viewrow">
        <div class="canvas">
          <strong class="temp">Temporary Hide/Isolate</strong>
          <svg class="model" viewBox="562 199 1977 1154" role="img" aria-label="Stair model with railing sketch">
            <g transform="translate(1130 560) scale(.4464 .3827)" class="lines">
              <path class="sh" d="M33 757L620 708 940 682 992 686 1014 842 955 900 700 1030 675 1021 669 973 105 1018 68 1016z"/>
              <path class="sh" d="M470 1208l33-2 34 246-165-9v-10l129-11zM928 1212L1141 1063l42 54 12 95z"/>
              <path class="sh" d="M537 1250L1183 1200 1213 1342 905 1367 785 1398 1020 1380 1183 1393 1183 1400 600 1446 537 1440z"/>
              <path class="wh" d="M592 1408h8v40h-8zM553 1410h9v40h-9zM650 1360h7v60l-7 10zM713 1313h11l-1 42-10 10zM684 1362h9v18l-9 10zM751 1280h5v58h-5zM783 1276h5v36l-5 3zM815 1274h7v14h-7z"/>
              <path class="land" d="M1150 709l350-28 33 239-350 28z"/>
              <path class="slab" d="M527 184l918-75 35 259-918 75z"/>
              <path class="sh" d="M527 184l35 259v51l-34-250z"/>
              <path class="sh" d="M1129 437l8 50 6 91 7 131v40l-7-131-8-91z"/>
              <path class="ln" d="M1129 437l351-28M1137 487l349-28M1137 528l349-28M1143 578l350-29M1145 618l348-28M1150 668l350-28M1150 709l350-28M1480 368v41l6 50v41l7 49v41l7 50v41l33 239v52M1129 437l8 50v41l6 50 2 40 5 50v43l33 239 350-28M562 443v51M527 184v50"/>
              <path class="blue" d="M537 113l825-66 89 655-824 66z"/>
              <path class="grid-h" d="M565 138l798-65M597 377l800-64M630 616l800-64"/>
              <path class="grid-v" d="M815 103l87 628M1127 78l85 625"/>
              <defs><g id="step"><path class="tread" d="M0 0l34-2 33 239-34 2z"/><path class="riser" d="M34-2l31-2 33 239-31 2z"/><path class="edge" d="M0 0l65-5 33 239-65 5zM0 0l4 0 31 236"/></g></defs>
              <use href="#step" x="1085" y="756"/><use href="#step" x="1020" y="802"/><use href="#step" x="955" y="848"/><use href="#step" x="890" y="894"/><use href="#step" x="825" y="940"/><use href="#step" x="760" y="986"/><use href="#step" x="696" y="1032"/><use href="#step" x="631" y="1078"/><use href="#step" x="566" y="1124"/><use href="#step" x="501" y="1170"/>
              <path class="riser" d="M531 1384l34-2 2 24-32 2zM596 1344l34-2 2 18-32 2zM662 1303l32-2 2 14-30 2z"/>
              <path class="post" d="M535 1260h6v194h-6zM548 1260h6v192h-6zM580 1258h7v191h-7zM612 1256h7v190h-7zM644 1253h7v190h-7zM677 1251h7v190h-7zM709 1248h7v190h-7zM742 1246h7v190h-7zM774 1243h7v190h-7zM807 1241h7v189h-7zM839 1238h7v189h-7zM872 1236h7v189h-7zM904 1233h7v189h-7zM936 1230h7v190h-7zM969 1228h7v189h-7zM1001 1225h7v190h-7zM1034 1223h7v189h-7zM1066 1220h7v190h-7zM1099 1218h7v189h-7zM1131 1215h7v189h-7zM1163 1212h6v189h-6zM1177 1210h6v190h-6z"/>
              <path class="post" d="M535 1244l648-52v20l-648 52zM535 1253l648-52"/>
              <path class="sketch" d="M533 772l650-52"/>
              <path class="arrow" d="M458 769l24-2-2-10 16 20-11 21-3-8-21 1zM1220 707l24-2-2-11 16 20-11 21-3-8-22 1z"/>
            </g>
          </svg>
          <svg class="cube" viewBox="0 0 140 124" role="img" aria-label="View cube">
            <ellipse cx="67" cy="71" rx="57" ry="39" fill="none" stroke="#f3f3f3" stroke-width="13" transform="rotate(4 67 71)"/>
            <ellipse cx="67" cy="71" rx="64" ry="44" fill="none" stroke="#c4c4c4" transform="rotate(4 67 71)"/>
            <ellipse cx="67" cy="71" rx="49" ry="33" fill="#fff" stroke="#c4c4c4" transform="rotate(4 67 71)"/>
            <ellipse cx="68" cy="68" rx="38" ry="27" fill="url(#g-shade)"/>
            <path d="M41 12l47-3 7 30-52 4z" fill="#f1f1f1" stroke="#888"/><path d="M43 43l52-4-2 36-48 4z" fill="url(#g-cube)" stroke="#888"/>
            <text x="69" y="64" transform="rotate(-4 69 60)">BACK</text>
            <text x="67" y="28" class="top" transform="rotate(178 67 25)">TOP</text>
            <text x="14" y="58" class="dir" transform="rotate(115 14 52)">E</text>
            <text x="49" y="114" class="dir" transform="rotate(12 49 108)">N</text>
            <text x="124" y="82" class="dir" transform="rotate(18 124 76)">W</text>
          </svg>
          <div class="navbar">
            <button aria-label="Close bar"><svg class="dot" viewBox="0 0 8 8"><circle cx="4" cy="4" r="4" fill="#aaa"/><path d="M2.500 2.500l3 3m0-3l-3 3" stroke="#fff"/></svg></button>
            <button aria-label="Steering wheel"><svg class="wheel" viewBox="0 0 22 22"><path d="M11 1h9q1 0 1 1v9a10 10 0 1 1-10-10z" fill="#e9ebf0" stroke="#8c8f96"/><circle cx="11" cy="11" r="5.500" fill="#f6f6f8" stroke="#8c8f96"/><path d="M7 15l-4 4M15 15l4 4" stroke="#8c8f96"/></svg></button>
            <svg class="caret"><use href="#caret"/></svg>
            <hr>
            <button aria-label="Zoom"><svg class="zoom" viewBox="0 0 17 17"><path d="M.5.500h11v11H.5z" fill="#bcd3ac" stroke="#86ad6e"/><circle cx="11" cy="11" r="3.500" fill="#fff" stroke="#999"/><path d="M13.500 13.500l3 3" stroke="#888" stroke-width="2"/></svg></button>
            <svg class="caret"><use href="#caret"/></svg>
            <button class="end" aria-label="Options"><svg class="dot" viewBox="0 0 8 8"><circle cx="4" cy="4" r="4" fill="#aaa"/><path d="M2 4h4" stroke="#fff"/></svg></button>
          </div>
        </div>
        <div class="vbar page"><svg><use href="#up"/></svg><i class="thumb"></i><svg class="flip"><use href="#up"/></svg></div>
      </div>
      <div class="viewctl">
        <button class="scale">1 : 100</button>
        <button aria-label="Detail level"><svg><use href="#v1"/></svg></button><button aria-label="Visual style"><svg><use href="#v2"/></svg></button><button aria-label="Sun path"><svg><use href="#v3"/></svg></button><button aria-label="Shadows"><svg><use href="#v4"/></svg></button><button aria-label="Rendering"><svg><use href="#v5"/></svg></button><button aria-label="Crop view"><svg><use href="#v6"/></svg></button><button aria-label="Crop region"><svg><use href="#v7"/></svg></button><button aria-label="Lock view"><svg><use href="#v8"/></svg></button><button aria-label="Temporary hide"><svg><use href="#v9"/></svg></button><button aria-label="Reveal hidden"><svg><use href="#v10"/></svg></button><button aria-label="View properties"><svg><use href="#v11"/></svg></button><button aria-label="Analytical model"><svg><use href="#v12"/></svg></button><button aria-label="Displacement"><svg><use href="#v13"/></svg></button><button aria-label="Constraints"><svg><use href="#v14"/></svg></button>
        <div class="hbar page"><svg class="ccw"><use href="#up"/></svg><i class="thumb"></i><svg class="cw"><use href="#up"/></svg></div>
      </div>
    </section>
  </main>

  <footer class="status">
    <p>Click to select, TAB for alternates, CTRL adds, SHIFT unselects.</p>
    <div class="sets">
      <svg><use href="#s1"/></svg>
      <select aria-label="Active workset"><option></option></select>
      <span class="count"><svg><use href="#s2"/></svg>:0</span>
      <span class="pair"><svg><use href="#s3"/></svg><svg><use href="#s4"/></svg></span>
      <select aria-label="Design option"><option>Main Model</option></select>
    </div>
    <div class="picks"><svg><use href="#p1"/></svg><svg><use href="#p2"/></svg><svg><use href="#p3"/></svg><svg><use href="#p4"/></svg><svg><use href="#p5"/></svg><svg><use href="#p6"/></svg><span class="count"><svg><use href="#p7"/></svg>:0</span></div>
  </footer>
</div>
</body>
</html>
```
FILE: styles.css
```css
* { box-sizing: border-box; }
:root { --teal: #d3ebe7; --gray: #ccc; --face: #eee; --cyan: #00f4ff; }
body { margin: 0; font: 12px/16px "Open Sans", "Noto Sans", sans-serif; color: #333; background: var(--face); }
button { margin: 0; padding: 0; border: 0; background: none; font: inherit; color: inherit; }
h1, h2, p, ul { margin: 0; padding: 0; font: inherit; list-style: none; }
svg { display: block; flex: none; width: 16px; height: 16px; }
.sprite { position: absolute; width: 0; height: 0; }
svg.caret { width: 8px; height: 8px; }
.flip { transform: rotate(180deg); }
.ccw { transform: rotate(-90deg); }
.cw { transform: rotate(90deg); }
.app { display: flex; flex-direction: column; min-height: 100vh; }

/* title bar */
.titlebar { display: flex; height: 28px; background: var(--gray); padding-bottom: 4px; }
.qat, .account, .window { display: flex; align-items: center; }
.tool { display: flex; align-items: center; justify-content: center; gap: 6px; width: 24px; height: 22px; }
.tool.drop { width: 36px; }
.tool.home { margin-right: 5px; }
.tool.narrow { width: 16px; }
.tool.on { margin: 0 1px; background: #c3dcf5; border: 1px solid #0a5fb8; }
.rule { width: 1px; height: 20px; background: #b4b4b4; margin: 0 3px; }
.title { flex: 1; text-align: center; line-height: 21px; color: #444; }
.signin { display: flex; align-items: center; gap: 4px; width: 122px; padding: 0 4px; text-align: left; }
.signin span { flex: 1; }
.window { gap: 14px; padding: 0 6px 0 62px; }
.window svg { width: 12px; height: 12px; }

/* ribbon tabs */
.tabs { display: flex; align-items: center; gap: 1px; height: 21px; background: var(--gray); line-height: 21px; }
.tabs button { padding: 0 8px; height: 21px; }
.tabs .file { width: 45px; margin-right: 2px; background: #2a7ab5; color: #fff; }
.tabs .current { background: var(--teal); color: #222; }
.tabs .cycle { display: flex; align-items: center; gap: 4px; margin-left: 12px; }
.cycle span { display: flex; align-items: center; justify-content: center; width: 15px; height: 10px; border: 1px solid #444; border-radius: 3px; background: #eee; }
.cycle span svg { width: 8px; height: 8px; }

/* ribbon */
.ribbon { display: flex; gap: 1px; height: 96px; background: var(--teal); border-bottom: 1px solid var(--gray); }
.panel { display: flex; flex-direction: column; background: var(--face); }
.panel h2 { display: flex; align-items: center; justify-content: center; gap: 4px; height: 19px; }
.panel .body { flex: 1; display: flex; padding: 3px 4px 2px; min-height: 0; }
.ctx h2 { background: var(--teal); }
.ctx { margin-right: 1px; }
.p-select { width: 56px; }
.p-select .body { padding-left: 7px; }
.p-props { width: 63px; }
.p-clip { width: 79px; }
.p-geo { width: 138px; }
.p-modify { width: 237px; }
.p-modify .body { padding-left: 2px; }
.p-view { width: 64px; }
.p-measure { width: 55px; }
.p-create { width: 82px; margin-right: 2px; }
.p-mode { width: 43px; }
.p-draw { width: 128px; }
.p-work { width: 159px; }
.p-tools { width: 99px; }
.p-opt { width: 73px; }
.panel svg { width: 16px; height: 16px; }
.panel svg.caret { width: 8px; height: 8px; }
.big { display: flex; flex-direction: column; align-items: center; height: 72px; line-height: 15px; flex: 1 1 auto; }
.big > svg:first-child { width: 28px; height: 32px; margin: 2px 0 4px; }
.big .caret { margin-top: 4px; }
.on { background: #bfdaf3; box-shadow: inset 0 0 0 1px #0a5fb8; }
.p-select .big { flex: none; width: 44px; }
.p-work .big.on { flex: none; width: 38px; }
.big:disabled, .labelled button:disabled { color: #a5a5a5; }
.stack { flex-direction: column; align-items: center; gap: 2px; }
.lg { display: flex; align-items: center; justify-content: center; gap: 6px; width: 38px; height: 35px; }
.lg svg:first-child { width: 30px; height: 30px; }
.lg.withcaret { width: 48px; }
.panel .lg.mid svg { width: 22px; height: 22px; }
.small { display: grid; grid-auto-rows: 24px; }
.small button, .large button { display: flex; align-items: center; justify-content: center; }
.c1 { grid-template-columns: 24px; }
.c2 { grid-template-columns: 25px 25px; }
.c2.wide { grid-template-columns: 34px 22px; }
.c3 { grid-template-columns: 25px 25px 25px; }
.small .withcaret { justify-content: flex-start; gap: 4px; padding-left: 4px; }
.large { display: grid; grid-auto-rows: 36px; }
.panel .large svg { width: 30px; height: 30px; }
.c4 { grid-template-columns: repeat(4, 39px); }
.c2l { grid-template-columns: 36px 38px; }
.labelled { display: flex; flex-direction: column; width: 70px; }
.labelled button { display: flex; align-items: center; gap: 6px; height: 24px; padding-left: 3px; }
.gallery { display: flex; margin: 1px -2px; width: 124px; height: 69px; border: 1px solid #bbb; }
.shapes { flex: 1; display: grid; grid-template-columns: repeat(5, 22px); grid-auto-rows: 24px; }
.shapes button { display: flex; align-items: center; justify-content: center; }
.spin { display: flex; flex-direction: column; width: 13px; }
.spin button { flex: 1; display: flex; align-items: center; justify-content: center; border-left: 1px solid #ccc; border-bottom: 1px solid #ccc; }
.check { display: flex; align-items: center; gap: 4px; }
.check input { appearance: none; margin: 0 0 0 2px; width: 13px; height: 13px; border: 1px solid #666; background: #fff; display: grid; place-items: center; }
.check input:checked::before { content: ""; width: 4px; height: 8px; border: solid #222; border-width: 0 2px 2px 0; transform: rotate(40deg); margin-bottom: 2px; }
.optionsbar { height: 28px; padding: 6px 8px; background: var(--teal); border-bottom: 2px solid var(--gray); color: #9fa8a6; text-shadow: 1px 1px 0 #fff; }

/* palettes */
.work { flex: 1; display: flex; }
.side { display: flex; flex-direction: column; width: 556px; border-right: 2px solid var(--gray); }
.palette { display: flex; align-items: center; justify-content: space-between; height: 20px; padding: 1px 5px 0 3px; color: #444; }
.palette svg { width: 11px; height: 11px; }
.typesel { display: flex; align-items: center; gap: 4px; width: 551px; height: 72px; margin-left: 1px; padding: 2px; border: 1px solid var(--gray); text-align: left; background: #f0f0f0; color: #444; }
.typesel .thumb { width: 66px; height: 66px; border: 1px solid var(--gray); }
.typesel .name { flex: 1; }
.filter { display: flex; gap: 6px; height: 25px; padding-left: 1px; }
.filter button { display: flex; align-items: center; gap: 4px; height: 23px; color: #111; }
select { appearance: none; width: 204px; height: 18px; padding: 0 2px; border: 0; border-radius: 0; font: inherit; color: #777; background: #fff url("data:image/svg+xml,%3Csvg xmlns='http://www.w3.org/2000/svg' width='12' height='12'%3E%3Cpath d='M2 4l4 4 4-4' fill='none' stroke='%23777'/%3E%3C/svg%3E") right 2px center no-repeat; }
.filter select { width: 469px; height: 23px; margin-top: 1px; padding-left: 4px; border: 1px solid #aaa; background-color: #e1e1e1; color: #111; }
.gridbox { height: 456px; margin: 0 2px 0 1px; background: #fff; }
.grid { width: 100%; table-layout: fixed; border-spacing: 0; line-height: 16px; color: #111; }
.k { width: 270px; }
.v { width: 269px; }
.b { width: 13px; }
.grid th { position: relative; height: 18px; padding: 0 0 0 2px; background: #dcdcdc; text-align: left; font-weight: 400; }
.grid th svg { position: absolute; right: 5px; top: 3px; width: 10px; height: 10px; }
.grid td { height: 18px; padding: 0 0 1px 2px; border: dotted #888; border-width: 0 1px 1px 0; }
.grid td:first-child { padding-left: 8px; }
.grid td:last-child { padding: 0 0 0 1px; }
.grid .off td { color: #777; }
.grid td.edit { padding: 0; }
.edit input { display: block; width: 100%; height: 17px; padding: 0 1px; border: 1px solid #000; font: inherit; color: #113; }
.grid td button { display: block; width: 10px; height: 16px; background: #ddd; border: 1px solid #aaa; }
.helpbar { display: flex; justify-content: space-between; align-items: flex-start; height: 30px; padding: 3px 4px 0 3px; border-bottom: 2px solid var(--gray); }
.helpbar a { color: #0563c1; line-height: 20px; }
.helpbar button { width: 73px; height: 22px; background: var(--gray); border: 1px solid #bbb; color: #888; }

/* project browser */
.browser { flex: 1; display: flex; flex-direction: column; }
.treebox { flex: 1; display: flex; margin: 0 2px 0 1px; min-height: 563px; background: #fff; }
.tree { flex: 1; line-height: 18px; color: #111; padding-left: 4px; }
.row { display: flex; align-items: center; height: 18px; }
.row svg { margin: 0 3px 0 8px; }
.row span { padding-left: 13px; background: repeating-linear-gradient(90deg, #999 0 1px, transparent 1px 2px) 0 9px / 9px 1px no-repeat; }
.row .sel { padding: 0 3px; background: #e1e1e1; }
.tg { position: relative; width: 9px; height: 9px; border: 1px solid #888; border-radius: 1px; background: linear-gradient(#2b4b9b, #2b4b9b) 50% / 5px 1px no-repeat, linear-gradient(#2b4b9b, #2b4b9b) 50% / 1px 5px no-repeat, #f5f5f5; }
.tg.minus { background: linear-gradient(#2b4b9b, #2b4b9b) 50% / 5px 1px no-repeat, #f5f5f5; }
.l1 { margin-left: 4px; border-left: 1px dotted #999; padding-left: 19px; }
.l1 > li { border-left: 1px dotted #999; }
.l1 > li > .row { margin-left: -5px; }
.l2 { padding-left: 15px; }
.l3 { margin-left: 24px; }
.l3 li { position: relative; height: 18px; padding-left: 18px; background: repeating-linear-gradient(90deg, #999 0 1px, transparent 1px 2px) 0 9px / 14px 1px no-repeat; }
.l3 li::before { content: ""; position: absolute; left: 0; top: 0; height: 18px; border-left: 1px dotted #999; }
.l3 li:last-child::before { height: 10px; }
.vbar { display: flex; flex-direction: column; align-items: center; width: 15px; padding: 4px 0 2px; background: #f0f0f0; }
.vbar svg, .hbar svg { width: 10px; height: 10px; }
.vbar .thumb { width: 100%; height: 37px; margin: 3px 0 auto; background: #cdcdcd; }
.hbar { display: flex; align-items: center; height: 15px; padding: 0 20px 0 4px; background: #f0f0f0; }
.hbar .thumb { width: 347px; height: 100%; margin: 0 auto 0 4px; background: #cdcdcd; }
.browser .hbar { margin-bottom: 2px; }

/* drawing area */
.stage { flex: 1; display: flex; flex-direction: column; min-width: 0; padding-left: 2px; background: #fff; }
.views { display: flex; height: 20px; margin-left: -2px; background: var(--gray); }
.vt { display: flex; align-items: center; gap: 7px; width: 128px; padding: 1px 0 0 7px; color: #444; }
.vt.current { width: 151px; padding-left: 5px; background: #fff; font-weight: 600; }
.current button { display: flex; align-items: center; gap: 7px; }
.current .x svg { width: 10px; height: 10px; }
.views .more { margin-left: auto; padding-right: 4px; }
.viewrow { flex: 1; display: flex; gap: 1px; padding-top: 2px; }
.canvas { position: relative; flex: 1; border: 4px solid var(--cyan); background: #fff; }
.temp { position: absolute; z-index: 1; left: 0; top: 0; height: 20px; padding: 0 4px 0 1px; background: var(--cyan); color: #000; font: bold 15px/17px "Liberation Sans", sans-serif; }
.model { position: absolute; inset: 0; width: 100%; height: 100%; }
.lines path { vector-effect: non-scaling-stroke; }
.sh { fill: #cdcdcd; }
.wh { fill: #fff; }
.land { fill: #fcfcfc; }
.slab { fill: #fefefe; stroke: #a2a2a2; }
.ln { fill: none; stroke: #a2a2a2; }
.blue { fill: #d7edf5; stroke: #0f96cc; mix-blend-mode: multiply; }
.grid-h, .grid-v { fill: none; stroke: #0f96cc; }
.grid-h { stroke-dasharray: 18 17; }
.grid-v { stroke-dasharray: 11 12; }
.tread { fill: #fafafa; }
.riser { fill: #c8c8c8; }
.edge { fill: none; stroke: #8d8d8d; }
.post { fill: #fff; stroke: #999; }
.sketch { stroke: #e000f0; stroke-width: 1.5; }
.arrow { fill: none; stroke: #1238b5; }
.cube { position: absolute; right: 13px; top: 42px; width: 140px; height: 124px; font: bold 10px "Open Sans", sans-serif; }
.cube text { text-anchor: middle; fill: #8f9297; }
.cube .top { font-size: 9px; }
.cube .dir { font-size: 16px; fill: #e2e2e2; stroke: #999; }
.navbar { position: absolute; right: -3px; top: 167px; display: flex; flex-direction: column; align-items: center; width: 35px; height: 117px; padding: 2px; border: 2px solid rgba(150,150,150,.6); border-radius: 5px; background: rgba(244,244,244,.8); }
.navbar > button:first-child, .navbar .end { align-self: flex-end; }
.navbar .dot { width: 8px; height: 8px; }
.navbar .wheel { width: 22px; height: 22px; margin: 10px 0 4px; }
.navbar hr { width: 26px; margin: 2px 0 8px; border: 0; border-top: 1px solid #bbb; }
.navbar .zoom { width: 17px; height: 17px; margin-bottom: 6px; }
.navbar .end { margin-top: auto; }
.vbar.page { width: 16px; }
.vbar.page .thumb { height: 16px; margin: auto 0; }
.viewctl { display: flex; align-items: center; height: 17px; background: #f0f0f0; margin-bottom: 2px; font-family: "DejaVu Sans", sans-serif; font-size: 11px; }
.viewctl button { width: 21px; }
.viewctl svg { width: 16px; height: 14px; }
.viewctl .scale { width: 78px; padding-left: 20px; text-align: left; color: #111; white-space: nowrap; }
.viewctl .hbar { flex: 1; padding: 0 20px 0 2px; }
.viewctl .hbar svg { width: 10px; height: 10px; }
.viewctl .hbar .thumb { width: 17px; margin: 0 auto; }

/* status bar */
.status { display: grid; grid-template-columns: 60% 1fr auto; align-items: center; height: 24px; padding: 1px 6px 0 0; background: var(--gray); color: #222; }
.status p { padding-left: 1px; }
.sets, .picks, .count, .pair { display: flex; align-items: center; }
.sets { gap: 8px; padding-left: 4px; }
.count { gap: 4px; }
.sets .count { width: 52px; padding-left: 2px; margin-right: -8px; }
.pair { gap: 10px; }
.picks { gap: 10px; padding-right: 64px; }
.picks .count { gap: 1px; }
```
